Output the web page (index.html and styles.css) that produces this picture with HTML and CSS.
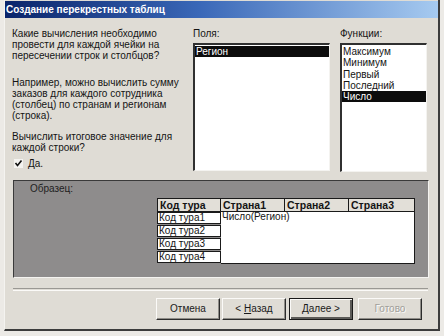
FILE: index.html
```html
<!DOCTYPE html>
<html>
<head>
<meta charset="utf-8">
<link rel="stylesheet" href="styles.css">
</head>
<body>
<div class="dlg">
  <div class="title">Создание перекрестных таблиц</div>
  <div class="top">
    <div class="left">
      <p class="p1">Какие вычисления необходимо<br>провести для каждой ячейки на<br>пересечении строк и столбцов?</p>
      <p class="p2">Например, можно вычислить сумму<br>заказов для каждого сотрудника<br>(столбец) по странам и регионам<br>(строка).</p>
      <p class="p3">Вычислить итоговое значение для<br>каждой строки?</p>
      <div class="chk"><span class="box"><svg width="9" height="9" viewBox="0 0 9 9"><path d="M1.5 4 L3.5 6.5 L7.5 1.5" fill="none" stroke="#111" stroke-width="1.6"/></svg></span><span>Да.</span></div>
    </div>
    <div class="col">
      <div class="lbl">Поля:</div>
      <div class="list fields">
        <div class="item sel">Регион</div>
      </div>
    </div>
    <div class="col">
      <div class="lbl">Функции:</div>
      <div class="list funcs">
        <div class="item">Максимум</div>
        <div class="item">Минимум</div>
        <div class="item">Первый</div>
        <div class="item">Последний</div>
        <div class="item sel">Число</div>
      </div>
    </div>
  </div>
  <div class="frame">
    <div class="flbl">Образец:</div>
    <div class="tbl">
      <div class="keys">
        <div class="hcell kh">Код тура</div>
        <div class="kcell">Код тура1</div>
        <div class="kcell">Код тура2</div>
        <div class="kcell">Код тура3</div>
        <div class="kcell">Код тура4</div>
      </div>
      <div class="vals">
        <div class="hrow">
          <div class="hcell c1">Страна1</div>
          <div class="hcell c2">Страна2</div>
          <div class="hcell c3">Страна3</div>
        </div>
        <div class="body">Число(Регион)</div>
      </div>
    </div>
  </div>
  <div class="sep"></div>
  <div class="buttons">
    <div class="btn b1">Отмена</div>
    <div class="btn b2">&lt; <u>Н</u>азад</div>
    <div class="btn b3 focus"><u>Д</u>алее &gt;</div>
    <div class="btn b4 dis">Готово</div>
  </div>
</div>
</body>
</html>
```

FILE: styles.css
```css
html, body {
  margin: 0;
  padding: 0;
}
body {
  width: 444px;
  height: 336px;
  background: #eceae6;
  overflow: hidden;
  font-family: "Liberation Sans", Arial, sans-serif;
  font-size: 10px;
  line-height: 11px;
  color: #141414;
}
.dlg {
  box-sizing: border-box;
  width: 436px;
  height: 331px;
  margin-left: 4px;
  padding-top: 1px;
  background: #dfdcd5;
  border-left: 1px solid #f4f3f0;
  border-right: 2px solid #3c3c3c;
  border-bottom: 2px solid #3c3c3c;
  display: flex;
  flex-direction: column;
}
.title {
  height: 17px;
  line-height: 17px;
  padding-left: 1px;
  background: linear-gradient(to right, #0a246a 0%, #3a68b8 45%, #a6caf0 100%);
  color: #fff;
  font-weight: bold;
  font-size: 10px;
  white-space: nowrap;
}
.top {
  display: grid;
  grid-template-columns: 181px 147px 87px;
  padding-left: 7px;
  padding-top: 10px;
}
.left p {
  margin: 0;
  white-space: nowrap;
}
.p2 { margin-top: 16px !important; }
.p3 { margin-top: 10px !important; }
.chk {
  display: flex;
  align-items: center;
  gap: 5px;
  margin-top: 5px;
  margin-left: 2px;
}
.box {
  width: 9px;
  height: 9px;
  background: #f4f3f0;
  display: block;
}
.box svg { display: block; }
.lbl {
  height: 11px;
  margin-bottom: 4px;
}
.list {
  box-sizing: border-box;
  height: 128px;
  background: #fff;
  border-top: 2px solid #303030;
  border-left: 2px solid #303030;
  border-right: 1px solid #f4f3f0;
  border-bottom: 1px solid #f4f3f0;
  padding-top: 1px;
}
.fields { width: 137px; }
.funcs { width: 87px; height: 129px; }
.item {
  height: 11.3px;
  line-height: 11.3px;
  padding-left: 1px;
  white-space: nowrap;
}
.item.sel {
  background: #0c0c0c;
  color: #fff;
}
.fields .item.sel { height: 11px; }
.frame {
  box-sizing: border-box;
  margin: 8px 0 0 8px;
  width: 416px;
  height: 98px;
  background: #8e8c8c;
  border-top: 1px solid #3a3a3a;
  border-left: 1px solid #3a3a3a;
  border-right: 1px solid #f4f3f0;
  border-bottom: 1px solid #f4f3f0;
  display: flex;
  flex-direction: column;
}
.flbl {
  margin: 2px 0 0 16px;
  color: #1e1e1e;
  height: 11px;
}
.tbl {
  align-self: flex-end;
  margin: 4px 13px 0 0;
  display: flex;
}
.keys {
  width: 64px;
  display: flex;
  flex-direction: column;
  gap: 1px;
}
.hcell {
  box-sizing: border-box;
  height: 14px;
  line-height: 12px;
  background: #e2dfd8;
  border: 1px solid #1a1a1a;
  font-weight: bold;
  font-size: 10.5px;
  padding-left: 2px;
  white-space: nowrap;
}
.kh { margin-bottom: -1px; }
.kcell {
  box-sizing: border-box;
  height: 12px;
  line-height: 9px;
  background: #fff;
  border: 1px solid #1a1a1a;
  padding-left: 1px;
  white-space: nowrap;
}
.vals {
  width: 194px;
  display: flex;
  flex-direction: column;
}
.hrow { display: flex; }
.hrow .hcell { border-left: none; }
.c1 { width: 64px; }
.c2 { width: 64px; }
.c3 { width: 66px; }
.body {
  box-sizing: border-box;
  height: 52px;
  background: #fff;
  border: 1px solid #1a1a1a;
  border-top: none;
  border-left: none;
  padding-left: 1px;
  line-height: 10px;
}
.sep {
  margin: 10px 0 0 8px;
  width: 415px;
  height: 1px;
  border-top: 1px solid #9a9893;
  border-bottom: 1px solid #fbfaf8;
}
.buttons {
  display: flex;
  margin-top: 7px;
  padding-left: 151px;
}
.btn {
  box-sizing: border-box;
  width: 64px;
  height: 22px;
  line-height: 20px;
  text-align: center;
  background: #dfdcd5;
  border-top: 1px solid #fbfaf8;
  border-left: 1px solid #fbfaf8;
  border-right: 1px solid #2c2c2c;
  border-bottom: 1px solid #2c2c2c;
  box-shadow: inset -1px -1px 0 #8f8d88;
  color: #1a1a1a;
  white-space: nowrap;
}
.btn u { text-decoration: underline; text-underline-offset: 1px; }
.b2 { margin-left: 2px; }
.b3 { margin-left: 3px; }
.b4 { margin-left: 5px; }
.focus {
  border: 1px solid #1a1a1a;
  box-shadow: inset 1px 1px 0 #fbfaf8, inset -2px -2px 0 #5c5b58;
}
.dis {
  color: #a19f9a;
  text-shadow: 1px 1px 0 #fbfaf8;
}
```
